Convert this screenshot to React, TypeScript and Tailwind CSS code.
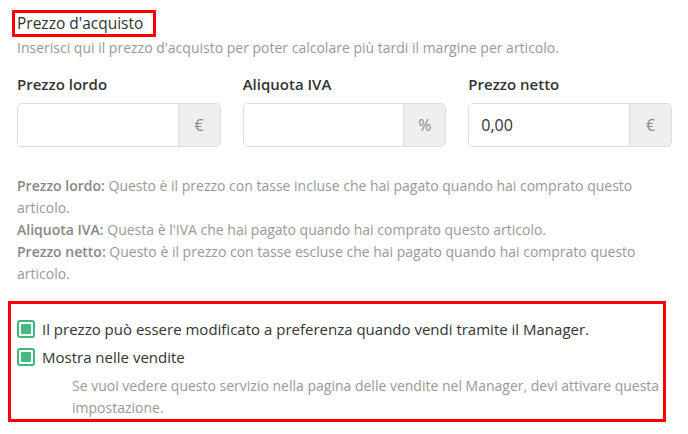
import React from "react";

function Check() {
  return (
    <span className="flex h-[18px] w-[18px] shrink-0 items-center justify-center rounded-[3px] border-2 border-[#3fb67f] bg-white">
      <span className="h-[10px] w-[10px] rounded-[1px] bg-[#45b883]" />
    </span>
  );
}

function Field({ label, value, addon }: { label: string; value?: string; addon: string }) {
  return (
    <div className="flex flex-col">
      <div className="mb-[8px] text-[15px] font-semibold leading-[22px] text-[#333]">{label}</div>
      <div className="flex h-[44px] overflow-hidden rounded-[5px] border border-[#dcdcdc]">
        <div className="flex flex-1 items-center bg-white pl-[12px] text-[16px] text-[#333]">{value}</div>
        <div className="flex w-[42px] items-center justify-center border-l border-[#dcdcdc] bg-[#efefef] text-[16px] text-[#888]">
          {addon}
        </div>
      </div>
    </div>
  );
}

export default function App() {
  return (
    <div
      className="relative h-[434px] w-[688px] overflow-hidden bg-white"
      style={{ fontFamily: '"Open Sans", sans-serif' }}
    >
      <div className="pl-[12px] pt-[10px]">
        <div className="inline-block border-[3px] border-[#ff0000] pl-[2px] pr-[10px] text-[15.5px] font-medium leading-[21px] text-[#333]">
          Prezzo d'acquisto
        </div>
      </div>
      <div className="pl-[17px] pr-[16px]">
        <div className="mt-[1px] text-[14px] leading-[20px] text-[#999]">
          Inserisci qui il prezzo d'acquisto per poter calcolare più tardi il margine per articolo.
        </div>
        <div className="mt-[15px] grid grid-cols-3 gap-x-[22px]">
          <Field label="Prezzo lordo" addon="€" />
          <Field label="Aliquota IVA" addon="%" />
          <Field label="Prezzo netto" value="0,00" addon="€" />
        </div>
        <div className="mt-[28px] text-[14px] leading-[22px] text-[#999]">
          <div>
            <span className="font-semibold text-[#888]">Prezzo lordo:</span> Questo è il prezzo con tasse incluse che hai
            pagato quando hai comprato questo articolo.
          </div>
          <div>
            <span className="font-semibold text-[#888]">Aliquota IVA:</span> Questa è l'IVA che hai pagato quando hai
            comprato questo articolo.
          </div>
          <div>
            <span className="font-semibold text-[#888]">Prezzo netto:</span> Questo è il prezzo con tasse escluse che hai
            pagato quando hai comprato questo articolo.
          </div>
        </div>
      </div>
      <div className="ml-[8px] mt-[16px] w-[658px] border-[3px] border-[#ff0000] pb-0 pl-[6px] pr-0 pt-[11px]">
        <div className="flex items-center gap-[7px] text-[15px] leading-[28px] text-[#333]">
          <Check />
          <span>Il prezzo può essere modificato a preferenza quando vendi tramite il Manager.</span>
        </div>
        <div className="flex items-center gap-[7px] text-[15px] leading-[28px] text-[#333]">
          <Check />
          <span>Mostra nelle vendite</span>
        </div>
        <div className="mt-[4px] pl-[55px] text-[14px] leading-[22px] text-[#999]">
          Se vuoi vedere questo servizio nella pagina delle vendite nel Manager, devi attivare questa impostazione.
        </div>
      </div>
    </div>
  );
}
